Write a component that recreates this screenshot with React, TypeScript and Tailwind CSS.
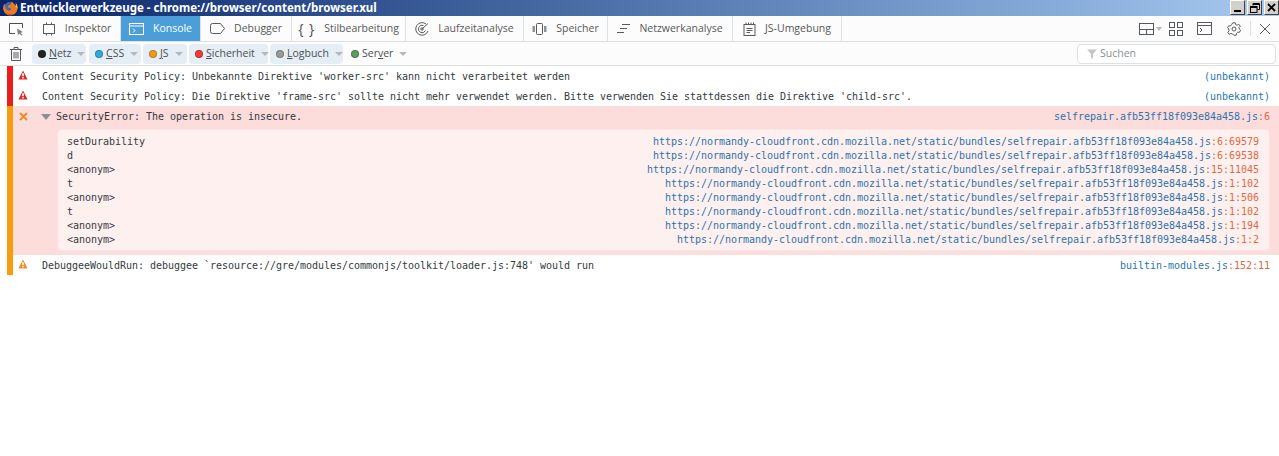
const ui = "font-['Open_Sans','Noto_Sans',sans-serif]";

function Tab({ w, label, active, icon }: { w: string; label: string; active?: boolean; icon: React.ReactNode }) {
  return (
    <div className={`${w} h-full flex items-center justify-center gap-[9px] whitespace-nowrap border-r border-[#dde1e4] ${active ? "bg-[#4c9ed9] text-white" : "text-[#585959]"}`}>
      {icon}
      <span>{label}</span>
    </div>
  );
}

const S = { fill: "none", stroke: "currentColor", strokeWidth: 1 };

function Filter({ w, label, dot, active = true }: { w: string; label: [string, string, string]; dot: string; active?: boolean }) {
  return (
    <div className={`${w} h-5 rounded-sm flex items-center pl-[6px] gap-[3px] ${active ? "bg-[#e6eef5]" : ""}`}>
      <span className={`${dot} w-2 h-2 rounded-full shrink-0 border border-black/20`} />
      <span className="text-[#4a4f55] whitespace-pre">
        {label[0]}<span className="underline">{label[1]}</span>{label[2]}
      </span>
      <span className="ml-[3px] w-0 h-0 border-l-[4px] border-r-[4px] border-t-[4px] border-l-transparent border-r-transparent border-t-[#b4b8bc]" />
    </div>
  );
}

function Warn({ color }: { color: string }) {
  return (
    <svg width="10" height="10" viewBox="0 0 10 10" className={color}>
      <path d="M5 0.5 L9.6 9.5 H0.4 Z" fill="currentColor" />
      <rect x="4.200" y="3.200" width="1.600" height="3" fill="#fff" />
      <rect x="4.200" y="7" width="1.600" height="1.400" fill="#fff" />
    </svg>
  );
}

const base = "https://normandy-cloudfront.cdn.mozilla.net/static/bundles/selfrepair.afb53ff18f093e84a458.js";
const frames: [string, string][] = [
  ["setDurability", "6:69579"],
  ["d", "6:69538"],
  ["<anonym>", "15:11045"],
  ["t", "1:102"],
  ["<anonym>", "1:506"],
  ["t", "1:102"],
  ["<anonym>", "1:194"],
  ["<anonym>", "1:2"],
];

function Loc({ file, pos }: { file: string; pos?: string }) {
  return (
    <span className="whitespace-pre text-[#2a74ad]">
      {file}
      {pos && <span className="text-[#e0683c]">:{pos}</span>}
    </span>
  );
}

function Row({ bar, icon, text, loc }: { bar: string; icon: React.ReactNode; text: string; loc: React.ReactNode }) {
  return (
    <div className="h-5 flex items-center pl-[7px] pr-[9px]">
      <div className={`w-[6px] h-full ${bar}`} />
      <div className="w-[29px] flex justify-center pr-[9px] -mt-[2px]">{icon}</div>
      <div className="flex-1 whitespace-pre text-[#333a40] mt-px">{text}</div>
      <span className="mt-px">{loc}</span>
    </div>
  );
}

export default function App() {
  return (
    <div className={`w-[1279px] h-[456px] bg-white overflow-hidden flex flex-col text-[10.5px] leading-none ${ui}`}>
      {/* title bar */}
      <div className="h-4 shrink-0 flex items-center bg-gradient-to-r from-[#0a246a] to-[#a6caf0]">
        <svg width="16" height="16" viewBox="0 0 16 16" className="ml-[2px] mr-[2px]">
          <circle cx="8" cy="8.500" r="6.500" fill="#3a6db5" />
          <path d="M2.500 3.500 C1 6 0.500 9 2 11.500 C3.500 14.500 6.500 15.800 9.500 15.300 C12.500 14.800 15 12.500 15.500 9 C15.800 6.500 15 4.500 13.800 3 C14.200 5 13.800 6 13 6.500 C12.500 4 11 2.500 9 1.500 C10 3.500 9 4.500 7.500 5 C6 5.500 5.500 6.500 6 7.500 C7 8 8 7.500 9 8.500 C9.500 10 8 11 6.500 10.500 C4.500 10 3.200 8.500 3.200 6.500 C3 5.500 2.700 4.500 2.500 3.500 Z" fill="#ee7a1f" />
          <path d="M13.800 3 C15 4.500 15.800 6.500 15.500 9 C15 8 14.500 7 13 6.500 C13.800 6 14.200 5 13.800 3 Z" fill="#fbc02d" />
          <path d="M3 12.500 C5 15 9 15.800 12 14 C9 14.500 5.500 14 3 12.500 Z" fill="#c9401c" />
        </svg>
        <span className="text-white font-bold text-[11.5px] font-['Noto_Sans',sans-serif] whitespace-pre">Entwicklerwerkzeuge - chrome://browser/content/browser.xul</span>
        <div className="ml-auto flex gap-[2px] h-[15px] self-start">
          {["min", "max", "close"].map((k) => (
            <div key={k} className="w-[15px] h-[15px] bg-[#d4d0c8] border-t border-l border-white border-r border-b border-r-[#404040] border-b-[#404040] flex items-center justify-center">
              {k === "min" && <div className="w-[7px] h-[2px] bg-black mt-[7px] -ml-px" />}
              {k === "max" && (
                <svg width="10" height="10" viewBox="0 0 10 10" fill="none" stroke="#000">
                  <path d="M3 2.500V0.500H9.500V6.500H7.500" />
                  <path d="M3 1.500H9.500" />
                  <rect x="0.500" y="3.500" width="6.500" height="6" />
                  <path d="M0.500 4.500H7" />
                </svg>
              )}
              {k === "close" && (
                <svg width="9" height="9" viewBox="0 0 9 9" stroke="#000" strokeWidth="1.800">
                  <path d="M1 1L8 8M8 1L1 8" />
                </svg>
              )}
            </div>
          ))}
        </div>
      </div>

      {/* tab toolbar */}
      <div className="h-[26px] shrink-0 flex items-center bg-[#fcfcfc] border-b border-[#dde1e4]">
        <div className="w-[33px] h-full flex items-center justify-center border-r border-[#dde1e4] text-[#4a4f55]">
          <svg width="16" height="14" viewBox="0 0 16 14">
            <path d="M7 11.500H1.500V1.500H14.500V6" {...S} />
            <path d="M9 6.500L15 10L12.500 10.800L14.500 13L13 13.500L11.500 11.500L10 13Z" fill="#7a7f85" />
          </svg>
        </div>
        <Tab w="w-[88px]" label="Inspektor" icon={
          <svg width="14" height="14" viewBox="0 0 14 14" {...S}>
            <rect x="1.500" y="2.500" width="11" height="9" />
            <path d="M4.500 0.500V2.500M9.500 0.500V2.500M4.500 11.500V13.500M9.500 11.500V13.500" />
          </svg>} />
        <Tab w="w-[80px]" label="Konsole" active icon={
          <svg width="15" height="13" viewBox="0 0 15 13" {...S}>
            <rect x="0.500" y="1.500" width="14" height="11" />
            <path d="M0.500 4H14.500M4 6.500L6 8.500L4 10.500" />
          </svg>} />
        <Tab w="w-[91px]" label="Debugger" icon={
          <svg width="15" height="11" viewBox="0 0 15 11" {...S}>
            <path d="M2.500 0.500H10.500L14.500 5.500L10.500 10.500H2.500Q0.500 10.500 0.500 8.500V2.500Q0.500 0.500 2.500 0.500Z" />
          </svg>} />
        <Tab w="w-[114px]" label="Stilbearbeitung" icon={<span className="text-[#4a4f55] text-[14px] tracking-[1px] whitespace-pre">{"{ }"}</span>} />
        <Tab w="w-[118px]" label="Laufzeitanalyse" icon={
          <svg width="14" height="14" viewBox="0 0 14 14" {...S}>
            <path d="M13 9A6.300 6.300 0 1 1 11 2" />
            <path d="M10.500 8.500A3.700 3.700 0 1 1 8.500 3.500" />
            <path d="M7 7L13 1.500" />
            <circle cx="7" cy="7" r="1.200" />
          </svg>} />
        <Tab w="w-[84px]" label="Speicher" icon={
          <svg width="15" height="12" viewBox="0 0 15 12">
            <rect x="4.500" y="0.500" width="6" height="11" rx="1" fill="none" stroke="currentColor" />
            <path d="M0.500 3H3V9H0.500ZM12 3H14.500V9H12Z" fill="#8f9295" />
          </svg>} />
        <Tab w="w-[125px]" label="Netzwerkanalyse" icon={
          <svg width="13" height="11" viewBox="0 0 13 11" {...S}>
            <path d="M5 1.500H13M3 5.500H10M0 9.500H7" />
          </svg>} />
        <Tab w="w-[109px]" label="JS-Umgebung" icon={
          <svg width="13" height="14" viewBox="0 0 13 14" {...S}>
            <rect x="1" y="2.500" width="11" height="11" />
            <path d="M3 0.500V2.500M5.500 0.500V2.500M8 0.500V2.500M10.500 0.500V2.500M3.500 6.500H9.500M3.500 8.500H9.500M3.500 10.500H7" />
          </svg>} />
        <div className="ml-auto flex items-center h-full text-[#55595e]">
          <svg width="15" height="12" viewBox="0 0 15 12" {...S}>
            <rect x="0.500" y="0.500" width="14" height="11" />
            <path d="M0.500 6.500H14.500M7.500 6.500V11.500" />
          </svg>
          <span className="ml-[2px] w-0 h-0 border-l-[3px] border-r-[3px] border-t-[4px] border-l-transparent border-r-transparent border-t-[#b4b8bc]" />
          <svg width="14" height="14" viewBox="0 0 14 14" {...S} className="ml-[7px]">
            <rect x="0.500" y="0.500" width="5" height="5" />
            <rect x="8.500" y="0.500" width="5" height="5" />
            <rect x="0.500" y="8.500" width="5" height="5" />
            <rect x="8.500" y="8.500" width="5" height="5" />
          </svg>
          <svg width="15" height="13" viewBox="0 0 15 13" {...S} className="ml-[14px]">
            <rect x="0.500" y="0.500" width="14" height="12" />
            <path d="M0.500 3.500H14.500M3 6L5 8L3 10" />
          </svg>
          <svg width="14" height="14" viewBox="0 0 14 14" {...S} className="ml-[15px]">
            <path d="M5.800 0.800H8.200L8.600 2.600L10.200 3.300L11.800 2.300L13.300 4.200L12 5.500L12.300 7L13.500 8.200L12.500 10.300L10.800 10.100L9.500 11.300L9.200 13.200H6.800L5.500 11.900L3.800 11.500L2.200 12.300L0.800 10.300L2 8.800L1.700 7L0.500 5.700L1.700 3.800L3.300 4L4.500 2.700Z" />
            <circle cx="7" cy="7" r="2" />
          </svg>
          <div className="w-px h-[15px] bg-[#dde1e4] ml-[9px]" />
          <svg width="12" height="12" viewBox="0 0 12 12" {...S} className="ml-[8px] mr-[8px]">
            <path d="M1 1L11 11M11 1L1 11" />
          </svg>
        </div>
      </div>

      {/* filter bar */}
      <div className="h-6 shrink-0 flex items-center bg-[#fcfcfc] border-b border-[#dde1e4]">
        <div className="w-[32px] flex justify-center text-[#55595e]">
          <svg width="12" height="14" viewBox="0 0 12 14" {...S}>
            <path d="M0 2.500H12M4 2.500V0.500H8V2.500M1.500 2.500V13.500H10.500V2.500M4 5V11.500M6 5V11.500M8 5V11.500" />
          </svg>
        </div>
        <Filter w="w-[54px] mr-[3px]" label={["", "N", "etz"]} dot="bg-[#222]" />
        <Filter w="w-[52px] mr-[2px]" label={["", "C", "SS"]} dot="bg-[#2fa8e0]" />
        <Filter w="w-[44px] mr-[2px]" label={["", "J", "S"]} dot="bg-[#f29a1f]" />
        <Filter w="w-[79px] mr-[2px]" label={["", "S", "icherheit"]} dot="bg-[#ef3b3b]" />
        <Filter w="w-[73px] mr-[2px]" label={["", "L", "ogbuch"]} dot="bg-[#9a9a9a]" />
        <Filter w="w-[68px]" label={["Ser", "v", "er"]} dot="bg-[#5f9a5f]" active={false} />
        <div className="ml-auto mr-[3px] w-[199px] h-5 bg-white border border-[#dde1e4] rounded-sm flex items-center pl-[9px] gap-[3px] text-[#8a8e92]">
          <svg width="10" height="10" viewBox="0 0 10 10" fill="#c4c6c8">
            <path d="M0 0.500H10L6 5V10L4 8.500V5Z" />
          </svg>
          <span>Suchen</span>
        </div>
      </div>

      {/* messages */}
      <div className="font-['DejaVu_Sans_Mono',monospace] text-[10px] leading-[14px] tracking-[-0.02px]">
        <Row bar="bg-[#ed1c1c]" icon={<Warn color="text-[#d92b2b]" />} text="Content Security Policy: Unbekannte Direktive 'worker-src' kann nicht verarbeitet werden" loc={<Loc file="(unbekannt)" />} />
        <Row bar="bg-[#ed1c1c]" icon={<Warn color="text-[#d92b2b]" />} text="Content Security Policy: Die Direktive 'frame-src' sollte nicht mehr verwendet werden. Bitte verwenden Sie stattdessen die Direktive 'child-src'." loc={<Loc file="(unbekannt)" />} />

        <div className="h-[149px] flex bg-[#fddcdc] ml-[7px]">
          <div className="w-[6px] bg-[#f89c0e] shrink-0" />
          <div className="flex-1 pr-[9px] min-w-0">
            <div className="h-[23px] flex items-center">
              <svg width="9" height="9" viewBox="0 0 9 9" stroke="#f08a1d" strokeWidth="1.800" className="ml-[6px] mr-[13px] -mt-[3px]">
                <path d="M1 1L8 8M8 1L1 8" />
              </svg>
              <span className="w-0 h-0 border-l-[5px] border-r-[5px] border-t-[6px] border-l-transparent border-r-transparent border-t-[#8f8f8f] mr-[5px] -mt-[2px]" />
              <span className="flex-1 whitespace-pre text-[#333a40] -mt-[2px]">SecurityError: The operation is insecure.</span>
              <span className="-mt-[2px]"><Loc file="selfrepair.afb53ff18f093e84a458.js" pos="6" /></span>
            </div>
            <div className="ml-[44px] h-[122px] bg-[#fff0f0] rounded-sm pl-[9px] pr-[10px] py-[5px] border border-[#fbe3e3] flex flex-col">
              {frames.map(([fn, pos], i) => (
                <div key={i} className="h-[14px] flex justify-between">
                  <span className="text-[#333a40]">{fn}</span>
                  <Loc file={base} pos={pos} />
                </div>
              ))}
            </div>
          </div>
        </div>

        <Row bar="bg-[#f89c0e]" icon={<Warn color="text-[#f08a1d]" />} text="DebuggeeWouldRun: debuggee `resource://gre/modules/commonjs/toolkit/loader.js:748' would run" loc={<Loc file="builtin-modules.js" pos="152:11" />} />
      </div>
    </div>
  );
}
